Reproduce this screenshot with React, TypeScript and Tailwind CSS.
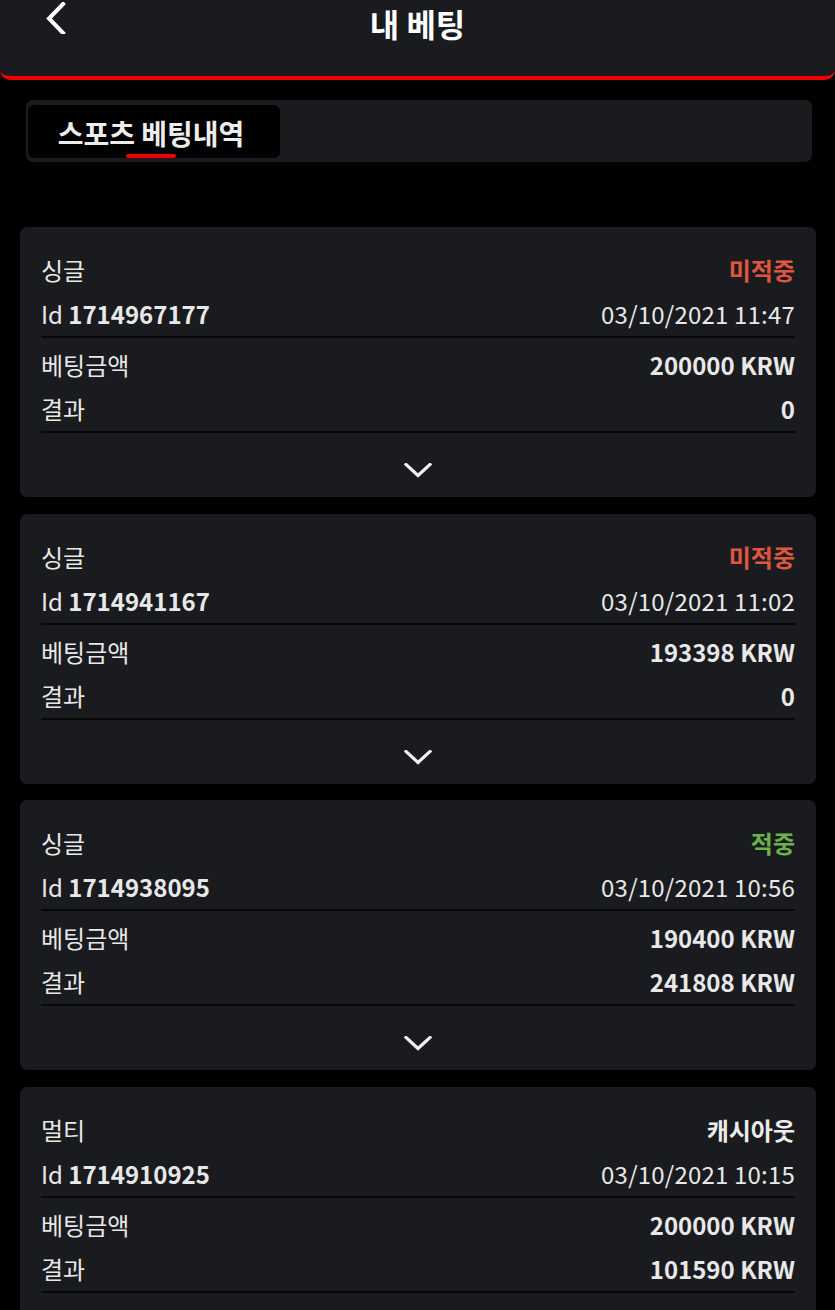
import React from "react";

type Bet = {
  type: string;
  status: string;
  statusClass: string;
  id: string;
  date: string;
  amount: string;
  result: string;
};

const bets: Bet[] = [
  { type: "싱글", status: "미적중", statusClass: "text-[#e0553f]", id: "1714967177", date: "03/10/2021 11:47", amount: "200000 KRW", result: "0" },
  { type: "싱글", status: "미적중", statusClass: "text-[#e0553f]", id: "1714941167", date: "03/10/2021 11:02", amount: "193398 KRW", result: "0" },
  { type: "싱글", status: "적중", statusClass: "text-[#6bb24d]", id: "1714938095", date: "03/10/2021 10:56", amount: "190400 KRW", result: "241808 KRW" },
  { type: "멀티", status: "캐시아웃", statusClass: "text-[#ececec]", id: "1714910925", date: "03/10/2021 10:15", amount: "200000 KRW", result: "101590 KRW" },
];

function Card({ b }: { b: Bet }) {
  return (
    <div className="w-[796px] shrink-0 rounded-[7px] bg-[#1a1b1f] px-[21px] pt-[21px] text-[24px] leading-[44px] text-[#e8e8e8]">
      <div className="flex justify-between">
        <span>{b.type}</span>
        <span className={`font-bold ${b.statusClass}`}>{b.status}</span>
      </div>
      <div className="flex justify-between">
        <span>
          Id <span className="font-bold">{b.id}</span>
        </span>
        <span className="tracking-[0.2px]">{b.date}</span>
      </div>
      <div className="h-[2px] bg-[#080809]" />
      <div className="mt-[5px] flex justify-between">
        <span>베팅금액</span>
        <span className="font-bold">{b.amount}</span>
      </div>
      <div className="flex justify-between">
        <span>결과</span>
        <span className="font-bold">{b.result}</span>
      </div>
      <div className="h-[2px] bg-[#080809]" />
      <div className="flex justify-center pt-[30px] pb-[19px]">
        <svg width="28" height="15" viewBox="0 0 28 15" fill="none" className="block">
          <path d="M2 1.5 L14 12.5 L26 1.5" stroke="#f0f0f0" strokeWidth="3.2" strokeLinecap="square" />
        </svg>
      </div>
    </div>
  );
}

export default function App() {
  return (
    <div
      className="min-h-[1310px] w-[835px] overflow-hidden bg-black"
      style={{ fontFamily: '"Noto Sans CJK KR", "Noto Sans", sans-serif' }}
    >
      <header className="relative flex h-[80px] items-start justify-center rounded-b-[10px] border-b-4 border-[#f00000] bg-[#1a1b1f]">
        <button className="absolute left-[44px] top-[2px]">
          <svg width="24" height="32" viewBox="0 0 24 32" fill="none">
            <path d="M19 2 L5 16.5 L19 31" stroke="#ffffff" strokeWidth="4" strokeLinecap="square" />
          </svg>
        </button>
        <h1 className="text-[32px] font-bold leading-[46px] text-white">내 베팅</h1>
      </header>

      <div className="mx-[26px] mt-[20px] flex h-[62px] w-[786px] items-center rounded-[7px] bg-[#1a1b1f] px-[2px]">
        <div className="relative flex h-[53px] w-[252px] items-center justify-center rounded-[6px] bg-black pt-[4px] pr-[6px]">
          <span className="text-[28px] font-bold leading-none text-[#ededed]">스포츠 베팅내역</span>
          <span className="absolute bottom-0 left-[98px] h-[4px] w-[50px] rounded-full bg-[#f00000]" />
        </div>
      </div>

      <div className="mt-[65px] flex flex-col gap-[16.5px] pl-[20px]">
        {bets.map((b) => (
          <Card key={b.id} b={b} />
        ))}
      </div>
    </div>
  );
}
